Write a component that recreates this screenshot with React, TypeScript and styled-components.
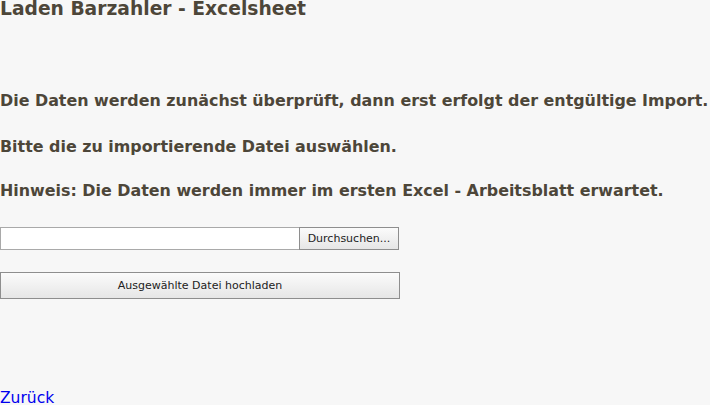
import React from 'react';
import styled, { createGlobalStyle } from 'styled-components';

const GlobalStyle = createGlobalStyle`
  html, body {
    margin: 0;
    padding: 0;
    background: #f7f7f7;
  }
`;

const Page = styled.div`
  font-family: 'DejaVu Sans', sans-serif;
  color: #4d4639;
  display: flex;
  flex-direction: column;
  align-items: flex-start;
`;

const Title = styled.h2`
  margin: 0;
  font-size: 18.7px;
  line-height: 20px;
  font-weight: bold;
  margin-top: -1px;
`;

const Info = styled.p<{ $top: number }>`
  margin: 0;
  font-size: 15.9px;
  line-height: 20px;
  font-weight: bold;
  margin-top: ${(p) => p.$top}px;
  white-space: nowrap;
`;

const UploadRow = styled.div`
  display: flex;
  margin-top: 26px;
  height: 23px;
`;

const FileField = styled.div`
  width: 298px;
  background: #fff;
  border: 1px solid #a9a9a9;
  border-right: none;
`;

const Button = styled.button<{ $width: number; $height: number }>`
  font-family: 'DejaVu Sans', sans-serif;
  font-size: 11px;
  color: #222;
  background: linear-gradient(#fbfbfb, #e6e6e6);
  border: 1px solid #8e8e8e;
  border-radius: 0;
  padding: 0;
  width: ${(p) => p.$width}px;
  height: ${(p) => p.$height}px;
`;

const SubmitRow = styled.div`
  margin-top: 22px;
`;

const BackLink = styled.a`
  margin-top: 90px;
  font-family: 'DejaVu Sans', sans-serif;
  font-size: 15.5px;
  line-height: 19px;
  color: #0000ee;
  text-decoration: none;
`;

const App: React.FC = () => (
  <>
    <GlobalStyle />
    <Page>
      <Title>Laden Barzahler - Excelsheet</Title>
      <Info $top={72}>Die Daten werden zunächst überprüft, dann erst erfolgt der entgültige Import.</Info>
      <Info $top={26}>Bitte die zu importierende Datei auswählen.</Info>
      <Info $top={24}>Hinweis: Die Daten werden immer im ersten Excel - Arbeitsblatt erwartet.</Info>
      <UploadRow>
        <FileField />
        <Button $width={100} $height={23}>Durchsuchen...</Button>
      </UploadRow>
      <SubmitRow>
        <Button $width={400} $height={27}>Ausgewählte Datei hochladen</Button>
      </SubmitRow>
      <BackLink href="#">Zurück</BackLink>
    </Page>
  </>
);

export default App;
